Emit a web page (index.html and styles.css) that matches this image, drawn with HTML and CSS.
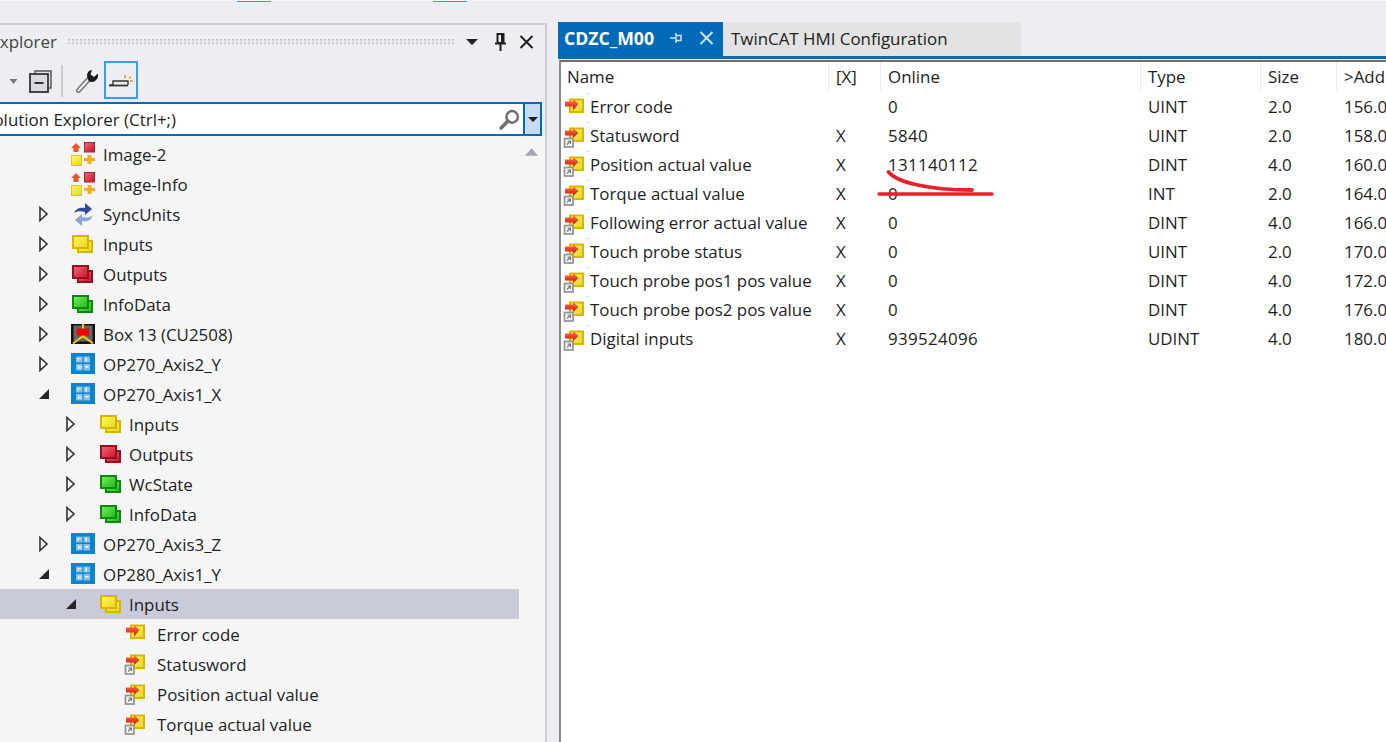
FILE: index.html
```html
<!DOCTYPE html>
<html lang="en">
<head>
<meta charset="utf-8">
<title>TwinCAT Solution Explorer</title>
<link rel="stylesheet" href="styles.css">
</head>
<body>
<svg class="defs" width="0" height="0" aria-hidden="true">
  <defs>
    <linearGradient id="gy" x1="0" y1="0" x2="1" y2="1"><stop offset="0" stop-color="#ffff50"/><stop offset="1" stop-color="#e8d030"/></linearGradient>
    <linearGradient id="gr" x1="0" y1="0" x2="1" y2="1"><stop offset="0" stop-color="#f46a78"/><stop offset="1" stop-color="#c8102a"/></linearGradient>
    <linearGradient id="gg" x1="0" y1="0" x2="1" y2="1"><stop offset="0" stop-color="#80ee60"/><stop offset="1" stop-color="#18b818"/></linearGradient>
    <linearGradient id="ga" x1="0" y1="0" x2="0" y2="1"><stop offset="0" stop-color="#ff7a50"/><stop offset=".55" stop-color="#ee3a24"/><stop offset="1" stop-color="#b81414"/></linearGradient>
    <symbol id="var-in" viewBox="0 0 24 24">
      <rect x="7" y="3.500" width="13" height="12.500" fill="url(#gy)" stroke="#dcb400" stroke-width="2"/>
      <path d="M2 5.500h8V3l5.500 5-5.500 6.500V10.500H2z" fill="url(#ga)"/>
    </symbol>
    <symbol id="var-link" viewBox="0 0 24 24">
      <rect x="7" y="3.500" width="13" height="12.500" fill="url(#gy)" stroke="#dcb400" stroke-width="2"/>
      <path d="M2 5.500h8V3l5.500 5-5.500 5V10.500H2z" fill="url(#ga)"/>
      <rect x="1.500" y="13.500" width="8.500" height="8.500" fill="#f4f4f4" stroke="#929292" stroke-width="1.700"/>
      <path d="M4 19.500l3-3M4.500 16h3v3" fill="none" stroke="#777" stroke-width="1.100"/>
    </symbol>
    <symbol id="stack-y" viewBox="0 0 24 24">
      <rect x="7" y="9" width="14" height="11" fill="url(#gy)" stroke="#d8b400" stroke-width="2"/>
      <rect x="2" y="4" width="15" height="12" fill="url(#gy)" stroke="#d8b400" stroke-width="2"/>
    </symbol>
    <symbol id="stack-r" viewBox="0 0 24 24">
      <rect x="7" y="9" width="14" height="11" fill="url(#gr)" stroke="#98101c" stroke-width="2"/>
      <rect x="2" y="4" width="15" height="12" fill="url(#gr)" stroke="#98101c" stroke-width="2"/>
    </symbol>
    <symbol id="stack-g" viewBox="0 0 24 24">
      <rect x="7" y="9" width="14" height="11" fill="url(#gg)" stroke="#0a8a0a" stroke-width="2"/>
      <rect x="2" y="4" width="15" height="12" fill="url(#gg)" stroke="#0a8a0a" stroke-width="2"/>
    </symbol>
    <symbol id="image" viewBox="0 0 24 24">
      <path d="M5 1l5 5H7.500v4h-5V6H0z" fill="#f4502e"/>
      <rect x="13.500" y="0.500" width="10" height="9.500" fill="url(#gr)" stroke="#98283a"/>
      <rect x="0.500" y="13.500" width="10" height="10" fill="url(#gy)" stroke="#d8c040"/>
      <path d="M16.500 13h4v3H24v3h-3.500v3h-4v-3H13v-3h3.500z" fill="#f0ac28"/>
    </symbol>
    <symbol id="sync" viewBox="0 0 24 24">
      <path d="M3 11C5 6 10 5 14 6V1l7 6-7 6V10C10 9 6 9 3 11z" fill="#30489c"/>
      <path d="M22 13C20 19 15 20 11 19v5l-7-6 7-6v3c4 1 8 1 11-2z" fill="#8ca0dc"/>
    </symbol>
    <symbol id="box" viewBox="0 0 24 24">
      <rect y="2" width="24" height="20" fill="#111"/>
      <rect x="2.500" y="3.500" width="19" height="16" fill="#666"/>
      <path d="M12 2v14M12 14L2 21.500M12 14l10 7.500" stroke="#f4c818" stroke-width="2" fill="none"/>
      <rect x="6" y="6.500" width="12" height="7" fill="#f00000"/>
    </symbol>
    <symbol id="drive" viewBox="0 0 24 24">
      <rect y="1" width="24" height="21" fill="#0a84cc"/>
      <path d="M5 4.500h6.500v6H5zM12.500 4.500H19v6h-6.500zM5 12h6.500v6.500H5zM12.500 12H19v6.500h-6.500z" fill="#84bfe6"/>
      <path d="M6.500 6h3.500v1H7.500v2H6.500zM14.500 5.500h1.500v4h-1.500zM7 13.500h1.500v3.500H7zM9.500 13.500h1v3.500h-1zM14 14h3.500v1.500H14z" fill="#eef6fc"/>
    </symbol>
    <symbol id="tri-open" viewBox="0 0 12 12"><path d="M11 1v10H1z" fill="#262626"/></symbol>
    <symbol id="tri-closed" viewBox="0 0 12 16"><path d="M2 1.500l7 6.500-7 6.500z" fill="#fff" stroke="#303030" stroke-width="1.600"/></symbol>
    <symbol id="close" viewBox="0 0 14 14"><path d="M1 1l12 12M13 1L1 13" fill="none" stroke="currentColor" stroke-width="2"/></symbol>
  </defs>
</svg>

<div class="top"><i class="top-mark"></i><i class="top-mark"></i></div>

<main class="main">
  <section class="left">
    <header class="title-bar">
      <div class="clip-title"><span>Solution Explorer</span></div>
      <div class="grip"></div>
      <div class="title-btns">
        <svg class="i-down" viewBox="0 0 12 6"><path d="M0 0h12L6 6z" fill="#1e1e1e"/></svg>
        <svg class="i-pin" viewBox="0 0 11 18"><path d="M2.500 1h6v9h-6zM0 10.500h11M5.500 11v7M7 2v8" fill="none" stroke="#1e1e1e" stroke-width="2"/></svg>
        <svg class="i-x"><use href="#close"/></svg>
      </div>
    </header>

    <div class="toolbar">
      <svg class="i-caret" viewBox="0 0 8 5"><path d="M0 0h8L4 5z" fill="#777"/></svg>
      <svg class="i-collapse" viewBox="0 0 23 23"><path d="M6 3V1h16v17h-2" fill="#e4e4e6" stroke="#555" stroke-width="1.500"/><rect x="1" y="4" width="18" height="18" fill="#dadade" stroke="#333" stroke-width="1.800"/><path d="M5.500 13h9" stroke="#333" stroke-width="2"/></svg>
      <span class="tb-sep"></span>
      <svg class="i-wrench" viewBox="0 0 22 23"><path d="M2.500 20.500L12 10" stroke="#777" stroke-width="5" stroke-linecap="round"/><path d="M2.500 20.500L12 10" stroke="#f0f0f0" stroke-width="2" stroke-linecap="round"/><path d="M16 0c-4 .5-6 4-4.500 8l1.500 3.500c4 1.500 8-.5 9-5 .2-1 .2-2 0-3l-4 3.500-3.500-2.500z" fill="#1a1a1a"/></svg>
      <button class="tb-active" type="button" aria-label="Show active">
        <svg viewBox="0 0 26 20"><path d="M2 15h3V11h15v4" fill="none" stroke="#333" stroke-width="1.400"/><path d="M1 15.500h19" stroke="#333" stroke-width="1.800"/><path d="M17 5v3M22 11h3M21 8l2-1" stroke="#d89a20" stroke-width="1.500"/></svg>
      </button>
    </div>

    <div class="search">
      <div class="search-text"><span>Search Solution Explorer (Ctrl+;)</span></div>
      <svg class="i-search" viewBox="0 0 20 20"><circle cx="12.500" cy="7.500" r="5.500" fill="none" stroke="#707070" stroke-width="2.400"/><path d="M8.500 11.500L2 18" stroke="#707070" stroke-width="3.400" stroke-linecap="round"/></svg>
      <span class="search-drop"><svg viewBox="0 0 10 5"><path d="M0 0h10L5 5z" fill="#1e1e1e"/></svg></span>
    </div>

    <div class="tree">
      <div class="tree-rows">
        <div class="row l1"><span class="tw"></span><svg class="ic"><use href="#image"/></svg><span>Image-2</span></div>
        <div class="row l1"><span class="tw"></span><svg class="ic"><use href="#image"/></svg><span>Image-Info</span></div>
        <div class="row l1"><svg class="tw"><use href="#tri-closed"/></svg><svg class="ic"><use href="#sync"/></svg><span>SyncUnits</span></div>
        <div class="row l1"><svg class="tw"><use href="#tri-closed"/></svg><svg class="ic"><use href="#stack-y"/></svg><span>Inputs</span></div>
        <div class="row l1"><svg class="tw"><use href="#tri-closed"/></svg><svg class="ic"><use href="#stack-r"/></svg><span>Outputs</span></div>
        <div class="row l1"><svg class="tw"><use href="#tri-closed"/></svg><svg class="ic"><use href="#stack-g"/></svg><span>InfoData</span></div>
        <div class="row l1"><svg class="tw"><use href="#tri-closed"/></svg><svg class="ic"><use href="#box"/></svg><span>Box 13 (CU2508)</span></div>
        <div class="row l1"><svg class="tw"><use href="#tri-closed"/></svg><svg class="ic"><use href="#drive"/></svg><span>OP270_Axis2_Y</span></div>
        <div class="row l1"><svg class="tw"><use href="#tri-open"/></svg><svg class="ic"><use href="#drive"/></svg><span>OP270_Axis1_X</span></div>
        <div class="row l2"><svg class="tw"><use href="#tri-closed"/></svg><svg class="ic"><use href="#stack-y"/></svg><span>Inputs</span></div>
        <div class="row l2"><svg class="tw"><use href="#tri-closed"/></svg><svg class="ic"><use href="#stack-r"/></svg><span>Outputs</span></div>
        <div class="row l2"><svg class="tw"><use href="#tri-closed"/></svg><svg class="ic"><use href="#stack-g"/></svg><span>WcState</span></div>
        <div class="row l2"><svg class="tw"><use href="#tri-closed"/></svg><svg class="ic"><use href="#stack-g"/></svg><span>InfoData</span></div>
        <div class="row l1"><svg class="tw"><use href="#tri-closed"/></svg><svg class="ic"><use href="#drive"/></svg><span>OP270_Axis3_Z</span></div>
        <div class="row l1"><svg class="tw"><use href="#tri-open"/></svg><svg class="ic"><use href="#drive"/></svg><span>OP280_Axis1_Y</span></div>
        <div class="row l2 selected"><svg class="tw"><use href="#tri-open"/></svg><svg class="ic"><use href="#stack-y"/></svg><span>Inputs</span></div>
        <div class="row l3"><svg class="ic"><use href="#var-in"/></svg><span>Error code</span></div>
        <div class="row l3"><svg class="ic"><use href="#var-link"/></svg><span>Statusword</span></div>
        <div class="row l3"><svg class="ic"><use href="#var-link"/></svg><span>Position actual value</span></div>
        <div class="row l3"><svg class="ic"><use href="#var-link"/></svg><span>Torque actual value</span></div>
      </div>
      <div class="scroll"><svg viewBox="0 0 14 8"><path d="M0 8L7 0l7 8z" fill="#a4a6b2"/></svg></div>
    </div>
  </section>

  <section class="right">
    <div class="tabs">
      <div class="tab active">
        <span>CDZC_M00</span>
        <svg class="i-tabpin" viewBox="0 0 12 10"><path d="M0 5h5M5 1h1v8H5M6 2.500h5v5H6" fill="none" stroke="#cfe4f6" stroke-width="1.500"/></svg>
        <svg class="i-tabx"><use href="#close"/></svg>
      </div>
      <div class="tab other"><span>TwinCAT HMI Configuration</span></div>
    </div>
    <div class="content">
      <div class="grid head">
        <div>Name</div><div>[X]</div><div>Online</div><div>Type</div><div>Size</div><div>&gt;Addr.</div>
      </div>
      <div class="grid"><div class="name"><svg class="ic"><use href="#var-in"/></svg>Error code</div><div></div><div>0</div><div>UINT</div><div>2.0</div><div>156.0</div></div>
      <div class="grid"><div class="name"><svg class="ic"><use href="#var-link"/></svg>Statusword</div><div>X</div><div>5840</div><div>UINT</div><div>2.0</div><div>158.0</div></div>
      <div class="grid"><div class="name"><svg class="ic"><use href="#var-link"/></svg>Position actual value</div><div>X</div><div>131140112</div><div>DINT</div><div>4.0</div><div>160.0</div></div>
      <div class="grid"><div class="name"><svg class="ic"><use href="#var-link"/></svg>Torque actual value</div><div>X</div><div>0</div><div>INT</div><div>2.0</div><div>164.0</div></div>
      <div class="grid"><div class="name"><svg class="ic"><use href="#var-link"/></svg>Following error actual value</div><div>X</div><div>0</div><div>DINT</div><div>4.0</div><div>166.0</div></div>
      <div class="grid"><div class="name"><svg class="ic"><use href="#var-link"/></svg>Touch probe status</div><div>X</div><div>0</div><div>UINT</div><div>2.0</div><div>170.0</div></div>
      <div class="grid"><div class="name"><svg class="ic"><use href="#var-link"/></svg>Touch probe pos1 pos value</div><div>X</div><div>0</div><div>DINT</div><div>4.0</div><div>172.0</div></div>
      <div class="grid"><div class="name"><svg class="ic"><use href="#var-link"/></svg>Touch probe pos2 pos value</div><div>X</div><div>0</div><div>DINT</div><div>4.0</div><div>176.0</div></div>
      <div class="grid"><div class="name"><svg class="ic"><use href="#var-link"/></svg>Digital inputs</div><div>X</div><div>939524096</div><div>UDINT</div><div>4.0</div><div>180.0</div></div>
      <svg class="ink" viewBox="0 0 120 30" aria-hidden="true">
        <path d="M11.500 2C20 12 50 20 95 20" fill="none" stroke="#e8202a" stroke-width="3.800" stroke-linecap="round"/>
        <path d="M2 24H115" fill="none" stroke="#e8202a" stroke-width="3.400" stroke-linecap="round"/>
      </svg>
    </div>
  </section>
</main>
</body>
</html>
```
FILE: styles.css
```css
* { box-sizing: border-box; }
html, body { margin: 0; height: 100%; }
body {
  width: 1386px;
  height: 742px;
  overflow: hidden;
  background: #eeeef2;
  color: #1e1e1e;
  font-family: "Open Sans", "Noto Sans", sans-serif;
  font-size: 16.900px;
}
.defs { position: absolute; }

.top { height: 22px; display: flex; gap: 162px; padding-left: 237px; border-top: 1px solid #f8f8fa; }
.top-mark { display: block; width: 34px; height: 1px; background: #4a90e0; }

.main { display: flex; height: 720px; }

.left {
  width: 547px;
  margin-top: 1px;
  display: flex;
  flex-direction: column;
  border-top: 2px solid #ccced9;
  border-right: 2px solid #ccced9;
}

.title-bar { height: 35px; display: flex; align-items: center; flex: none; padding-bottom: 2px; }
.clip-title { width: 57px; display: flex; justify-content: flex-end; overflow: hidden; white-space: nowrap; color: #444; font-size: 17px; }
.grip {
  width: 388px;
  height: 7px;
  margin-left: 10px;
  background-image: radial-gradient(#c2c4cd 1px, transparent 1.200px);
  background-size: 4px 3.500px;
}
.title-btns { display: flex; align-items: center; margin-left: 11px; }
.i-down { width: 12px; height: 6px; }
.i-pin { width: 11px; height: 18px; margin-left: 17px; }
.i-x { width: 15px; height: 14px; margin-left: 13px; color: #1e1e1e; }

.toolbar { height: 42px; display: flex; align-items: center; flex: none; padding-left: 9px; }
.i-caret { width: 9px; height: 5px; }
.i-collapse { width: 23px; height: 23px; margin-left: 11px; }
.tb-sep { width: 2px; height: 32px; margin-left: 9px; background: #c8cad4; }
.i-wrench { width: 22px; height: 23px; margin-left: 13px; }
.tb-active {
  width: 34px;
  height: 38px;
  margin-left: 6px;
  margin-top: -2px;
  padding: 0;
  display: flex;
  align-items: center;
  justify-content: center;
  background: #eeeef2;
  border: 2px solid #3f9bf0;
}
.tb-active svg { width: 26px; height: 20px; }

.search {
  height: 34px;
  width: 542px;
  flex: none;
  display: flex;
  align-items: center;
  background: #fff;
  border: 2px solid #0069b8;
  border-left: 0;
}
.search-text { width: 176px; display: flex; justify-content: flex-end; overflow: hidden; white-space: nowrap; flex: none; color: #1e1e1e; }
.i-search { width: 21px; height: 21px; margin-left: 323px; flex: none; }
.search-drop {
  width: 18px;
  height: 100%;
  margin-left: 3px;
  display: flex;
  align-items: center;
  justify-content: center;
  background: #c7dcf3;
  border-left: 2px solid #0069b8;
}
.search-drop svg { width: 10px; height: 5px; }

.tree { flex: 1; min-height: 0; display: flex; background: #f5f5f5; overflow: hidden; padding-top: 3px; }
.tree-rows { width: 519px; flex: none; }
.scroll { flex: 1; display: flex; justify-content: center; padding: 9px 1px 0 0; }
.scroll svg { width: 13px; height: 8px; }

.row { height: 30px; display: flex; align-items: center; white-space: nowrap; }
.row .tw { width: 12px; height: 16px; flex: none; margin-right: 21px; }
.row .ic { width: 24px; height: 24px; flex: none; margin-right: 8px; }
.l1 { padding-left: 38px; }
.l2 { padding-left: 65px; }
.l2 .tw { margin-right: 22px; }
.l2 .ic { margin-right: 6px; }
.l3 { padding-left: 124px; }
.l3 .ic { margin-right: 9px; }
.selected { background: #c9cbda; }

.right { flex: 1; min-width: 0; padding-left: 11px; overflow: hidden; display: flex; flex-direction: column; }
.tabs { height: 37px; display: flex; flex: none; border-bottom: 3px solid #0069b8; }
.tab { height: 34px; display: flex; align-items: center; white-space: nowrap; padding-bottom: 2px; }
.tab.active { width: 165px; padding-left: 6px; background: #0069b8; color: #fff; font-weight: 700; font-size: 17.700px; }
.i-tabpin { width: 12px; height: 10px; margin-left: 16px; }
.i-tabx { width: 15px; height: 14px; margin-left: 17px; color: #cfe4f6; }
.tab.other { width: 298px; padding-left: 8px; background: #e3e3e3; color: #222; }

.content { position: relative; flex: 1; margin-left: 1px; background: #fff; border-top: 2px solid #6f6f6f; border-left: 2px solid #8a8a8a; margin-top: 1px; }
.grid {
  display: grid;
  grid-template-columns: 268px 52px 260px 120px 76px 60px;
  height: 29px;
  align-items: center;
  white-space: nowrap;
  overflow: hidden;
}
.grid > div { padding-left: 7px; overflow: hidden; height: 100%; display: flex; align-items: center; }
.grid > div:nth-child(3) { letter-spacing: 0.350px; }
.head { height: 28px; margin-bottom: 2px; }
.head > div { padding-left: 7px; border-right: 1px solid #ececec; }
.head > div:first-child { padding-left: 6px; }
.head > div:nth-child(3) { letter-spacing: 0; }
.grid > .name { padding-left: 2px; position: relative; }
.name .ic { width: 24px; height: 24px; margin: 2px 3px 0 0; flex: none; }
.name::after { content: ""; position: absolute; left: 26px; top: 1px; width: 1px; height: 1px; background: #35e0e0; }

.ink { position: absolute; left: 316px; top: 108px; width: 120px; height: 30px; overflow: visible; }
```
